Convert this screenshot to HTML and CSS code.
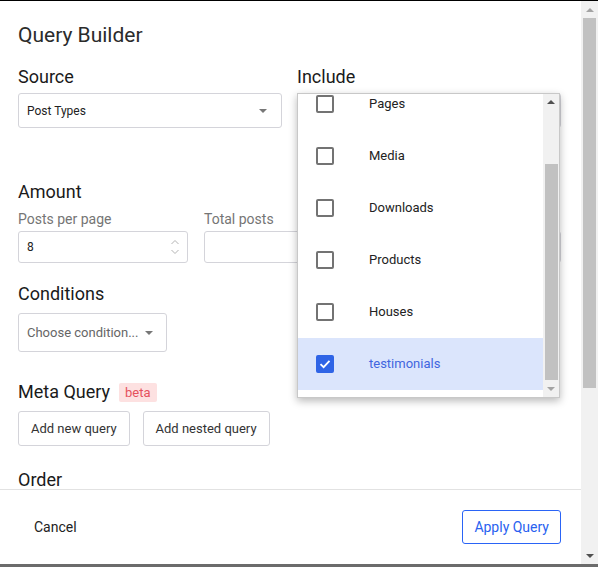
FILE: index.html
```html
<!DOCTYPE html>
<html lang="en">
<head>
    <meta charset="UTF-8">
    <meta name="viewport" content="width=device-width, initial-scale=1.0">
    <title>Query Builder</title>
    <link rel="stylesheet" href="styles.css">
</head>
<body>
    <div class="window">
        <div class="dialog">
            <div class="dialog-body">
                <h1 class="dialog-title">Query Builder</h1>

                <div class="row source-row">
                    <div class="field">
                        <h2 class="section-title">Source</h2>
                        <div class="select select-source">
                            <span>Post Types</span>
                            <span class="caret"></span>
                        </div>
                    </div>
                    <div class="field">
                        <h2 class="section-title">Include</h2>
                        <div class="select-wrap">
                            <div class="select select-source"></div>
                            <div class="dropdown">
                                <ul class="options">
                                    <li class="option"><span class="checkbox"></span>Pages</li>
                                    <li class="option"><span class="checkbox"></span>Media</li>
                                    <li class="option"><span class="checkbox"></span>Downloads</li>
                                    <li class="option"><span class="checkbox"></span>Products</li>
                                    <li class="option"><span class="checkbox"></span>Houses</li>
                                    <li class="option selected">
                                        <span class="checkbox checked">
                                            <svg width="12" height="10" viewBox="0 0 12 10"><path d="M1.5 5.2 L4.6 8.2 L10.5 1.8" fill="none" stroke="#fff" stroke-width="1.8"/></svg>
                                        </span>testimonials
                                    </li>
                                </ul>
                                <div class="list-scrollbar">
                                    <span class="arrow-up dark"></span>
                                    <div class="list-track"><div class="list-thumb"></div></div>
                                    <span class="arrow-down"></span>
                                </div>
                            </div>
                        </div>
                    </div>
                </div>

                <h2 class="section-title amount-title">Amount</h2>
                <div class="row amount-row">
                    <div class="field posts-field">
                        <label class="field-label">Posts per page</label>
                        <div class="input number-input">
                            <span>8</span>
                            <svg class="spinner" width="10" height="18" viewBox="0 0 10 18"><path d="M1.5 6 L5 2.5 L8.5 6" fill="none" stroke="#b4b4b4" stroke-width="1"/><path d="M1.5 12 L5 15.5 L8.5 12" fill="none" stroke="#b4b4b4" stroke-width="1"/></svg>
                        </div>
                    </div>
                    <div class="field total-field">
                        <label class="field-label">Total posts</label>
                        <div class="input"></div>
                    </div>
                </div>

                <h2 class="section-title conditions-title">Conditions</h2>
                <div class="select select-conditions">
                    <span>Choose condition...</span>
                    <span class="caret"></span>
                </div>

                <h2 class="section-title meta-title">Meta Query <span class="badge">beta</span></h2>
                <div class="button-row">
                    <button class="btn">Add new query</button>
                    <button class="btn">Add nested query</button>
                </div>

                <h2 class="section-title order-title">Order</h2>
            </div>
            <div class="dialog-footer">
                <button class="btn-text">Cancel</button>
                <button class="btn btn-primary">Apply Query</button>
            </div>
        </div>
        <div class="page-scrollbar">
            <span class="arrow-up"></span>
            <div class="page-track"><div class="page-thumb"></div></div>
            <span class="arrow-down dark"></span>
        </div>
    </div>
    <div class="statusbar"></div>
</body>
</html>
```

FILE: styles.css
```css
body {
    margin: 0;
    font-family: Roboto, "Liberation Sans", Arial, sans-serif;
    color: #1e1e1e;
    background-color: #fff;
}
.window {
    display: flex;
    height: 563px;
    border-top: 1px solid #000;
}
.dialog {
    flex: 1;
    display: flex;
    flex-direction: column;
}
.dialog-body {
    height: 488px;
    overflow: hidden;
    padding: 21px 20px 0 18px;
    box-sizing: border-box;
}
.dialog-title {
    margin: 0 0 18px;
    font-size: 21px;
    line-height: 26px;
    font-weight: 400;
    color: #2b2b2b;
}
.section-title {
    margin: 0;
    font-size: 18px;
    line-height: 22px;
    font-weight: 400;
    color: #1a1a1a;
}
.row {
    display: flex;
    gap: 15px;
}
.source-row .field {
    flex: 1;
}
.source-row .section-title {
    margin-bottom: 5px;
}
.select {
    display: flex;
    align-items: center;
    justify-content: space-between;
    border: 1px solid #d4d4da;
    border-radius: 3px;
    box-sizing: border-box;
    color: #222;
}
.select-source {
    height: 35px;
    padding: 0 14px 0 8px;
    font-size: 12px;
}
.caret {
    width: 0;
    height: 0;
    border-left: 4px solid transparent;
    border-right: 4px solid transparent;
    border-top: 4px solid #777;
}
.select-wrap {
    position: relative;
}
.dropdown {
    position: absolute;
    top: 0;
    left: 0;
    width: 263px;
    height: 305px;
    display: flex;
    background-color: #fff;
    border: 1px solid #c8c8c8;
    box-sizing: border-box;
    box-shadow: 0 3px 8px rgba(0, 0, 0, 0.28);
    overflow: hidden;
    z-index: 2;
}
.options {
    flex: 1;
    list-style: none;
    margin: -16px 0 0;
    padding: 0;
}
.option {
    display: flex;
    align-items: center;
    height: 52px;
    padding: 0 0 1px 18px;
    box-sizing: border-box;
    font-size: 13px;
    color: #222;
}
.option.selected {
    background-color: #dbe5fc;
    color: #4166df;
}
.checkbox {
    width: 18px;
    height: 18px;
    margin-right: 35px;
    border: 2px solid #737373;
    border-radius: 2px;
    box-sizing: border-box;
    display: flex;
    align-items: center;
    justify-content: center;
}
.checkbox.checked {
    background-color: #2f64e6;
    border-color: #2f64e6;
}
.list-scrollbar {
    width: 16px;
    display: flex;
    flex-direction: column;
    align-items: center;
    background-color: #f1f1f1;
}
.list-track {
    flex: 1;
    align-self: stretch;
    padding-top: 54px;
    padding-bottom: 1px;
}
.list-thumb {
    height: 216px;
    margin: 0 1px 0 2px;
    background-color: #c1c1c1;
}
.arrow-up,
.arrow-down {
    display: block;
    width: 0;
    height: 0;
    margin: 6px 0;
    border-left: 4px solid transparent;
    border-right: 4px solid transparent;
}
.arrow-up {
    border-bottom: 4px solid #a3a3a3;
}
.arrow-down {
    border-top: 4px solid #a3a3a3;
}
.arrow-up.dark {
    border-bottom-color: #505050;
}
.arrow-down.dark {
    border-top-color: #505050;
}
.amount-title {
    margin-top: 53px;
}
.amount-row {
    gap: 16px;
}
.posts-field {
    width: 170px;
}
.total-field {
    flex: 1;
}
.field-label {
    display: block;
    margin: 7px 0 3px;
    font-size: 14px;
    line-height: 18px;
    color: #757575;
}
.input {
    height: 32px;
    border: 1px solid #d4d4da;
    border-radius: 3px;
    box-sizing: border-box;
}
.number-input {
    display: flex;
    align-items: center;
    justify-content: space-between;
    padding: 0 7px 0 8px;
    font-size: 12px;
    color: #222;
}
.conditions-title {
    margin-top: 20px;
}
.select-conditions {
    width: 149px;
    height: 39px;
    margin-top: 8px;
    padding: 0 13px 0 8px;
    font-size: 13px;
    color: #666;
}
.meta-title {
    margin-top: 29px;
    display: flex;
    align-items: center;
    gap: 9px;
}
.badge {
    padding: 0 6px;
    font-size: 13px;
    line-height: 19px;
    color: #e5515d;
    background-color: #fde1e1;
    border-radius: 2px;
}
.button-row {
    display: flex;
    gap: 13px;
    margin-top: 8px;
}
.btn {
    height: 35px;
    padding: 0 12px;
    font-family: inherit;
    font-size: 13px;
    color: #333;
    background-color: #fff;
    border: 1px solid #d4d4da;
    border-radius: 3px;
}
.order-title {
    margin-top: 23px;
}
.dialog-footer {
    flex: 1;
    display: flex;
    align-items: center;
    justify-content: space-between;
    padding: 0 20px 0 18px;
    border-top: 1px solid #e2e2e2;
}
.btn-text {
    padding: 0 16px;
    font-family: inherit;
    font-size: 14px;
    color: #222;
    background: none;
    border: none;
}
.btn-primary {
    height: 34px;
    padding: 0 11px;
    font-size: 14px;
    color: #2962f0;
    border-color: #2a64f6;
}
.page-scrollbar {
    width: 17px;
    display: flex;
    flex-direction: column;
    align-items: center;
    background-color: #f1f1f1;
}
.page-scrollbar .arrow-up {
    margin: 7px 0 6px;
}
.page-track {
    flex: 1;
    align-self: stretch;
}
.page-thumb {
    height: 370px;
    margin: 0 2px;
    background-color: #c1c1c1;
}
.statusbar {
    height: 3px;
    background-color: #6b6b6b;
}
```
